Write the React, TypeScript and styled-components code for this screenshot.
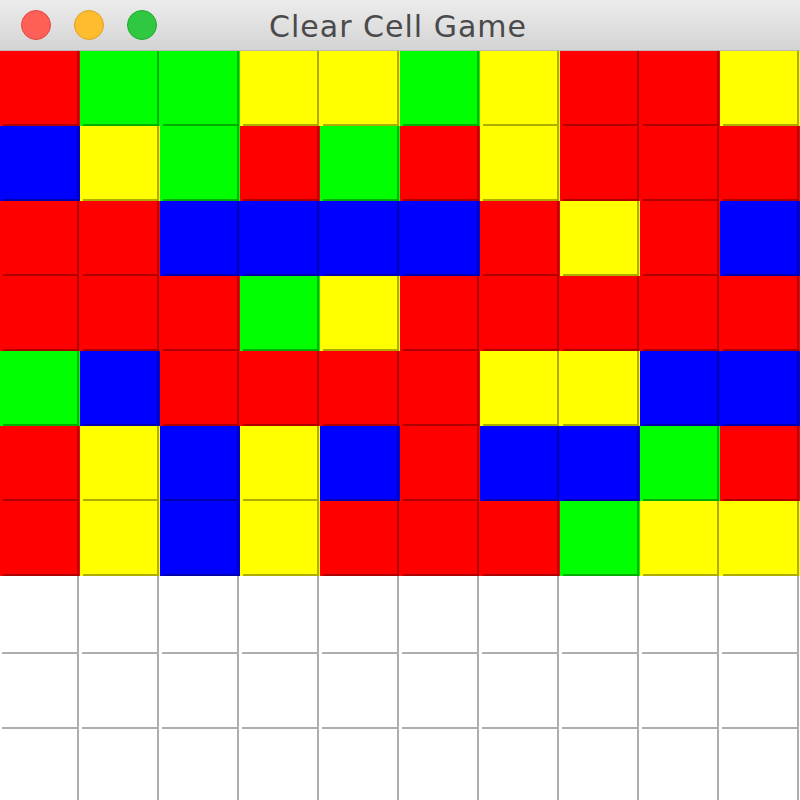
import React from "react";
import styled, { createGlobalStyle } from "styled-components";

type Tone = "R" | "G" | "B" | "Y" | "_";

const GlobalStyle = createGlobalStyle`
  html, body {
    margin: 0;
    padding: 0;
    background: #ffffff;
    overflow: hidden;
  }
`;

const tones: Record<Exclude<Tone, "_">, string> = {
  R: "#ff0000",
  G: "#00ff00",
  B: "#0000ff",
  Y: "#ffff00",
};

const board: Tone[][] = [
  "RGGYYGYRRY",
  "BYGRGRYRRR",
  "RRBBBBRYRB",
  "RRRGYRRRRR",
  "GBRRRRYYBB",
  "RYBYBRBBGR",
  "RYBYRRRGYY",
  "__________",
  "__________",
  "__________",
].map((row) => row.split("") as Tone[]);

const Window = styled.div`
  width: 800px;
  height: 800px;
  display: flex;
  flex-direction: column;
  overflow: hidden;
  background: #ffffff;
`;

const TitleBar = styled.div`
  flex: 0 0 50px;
  display: grid;
  grid-template-columns: 1fr auto 1fr;
  align-items: center;
  padding: 0 21px;
  background: linear-gradient(#ececec, #d4d4d4);
  border-bottom: 1px solid #b9b9b9;
  .lights {
    display: flex;
    gap: 23px;
  }
  .title {
    font-family: "DejaVu Sans", "Liberation Sans", sans-serif;
    font-size: 30px;
    color: #4a4a4a;
    letter-spacing: 1px;
    margin-top: 2px;
    padding-right: 4px;
  }
`;

const Light = styled.span<{ $fill: string; $edge: string }>`
  width: 30px;
  height: 30px;
  border-radius: 50%;
  box-sizing: border-box;
  background: ${(p) => p.$fill};
  border: 1px solid ${(p) => p.$edge};
  margin-top: -1px;
`;

const Grid = styled.div`
  display: grid;
  grid-template-columns: repeat(10, 80px);
  grid-auto-rows: 75px;
`;

const shade = "rgba(0, 0, 0, 0.32)";

const Cell = styled.div<{ $tone: string }>`
  background:
    linear-gradient(${shade}, ${shade}) right 1px top 0 / 2px 100% no-repeat,
    linear-gradient(${shade}, ${shade}) left 3px bottom 0 / calc(100% - 6px) 2px no-repeat,
    ${(p) => p.$tone};
`;

const grey = "#aeaeae";

const EmptyCell = styled.div<{ $lined: boolean }>`
  background:
    linear-gradient(${grey}, ${grey}) right 1px top 0 / 2px 100% no-repeat,
    ${(p) =>
      p.$lined
        ? `linear-gradient(${grey}, ${grey}) left 2px top 1px / calc(100% - 5px) 2px no-repeat,`
        : ""}
    #ffffff;
`;

const App: React.FC = () => {
  return (
    <Window>
      <GlobalStyle />
      <TitleBar>
        <div className="lights">
          <Light $fill="#fe6058" $edge="#e2463f" />
          <Light $fill="#febc2e" $edge="#e0a027" />
          <Light $fill="#2fc840" $edge="#1eaa2c" />
        </div>
        <div className="title">Clear Cell Game</div>
        <div />
      </TitleBar>
      <Grid>
        {board.map((row, r) =>
          row.map((t, c) =>
            t === "_" ? (
              <EmptyCell key={`${r}-${c}`} $lined={r > 0 && board[r - 1][c] === "_"} />
            ) : (
              <Cell key={`${r}-${c}`} $tone={tones[t]} />
            )
          )
        )}
      </Grid>
    </Window>
  );
};

export default App;
